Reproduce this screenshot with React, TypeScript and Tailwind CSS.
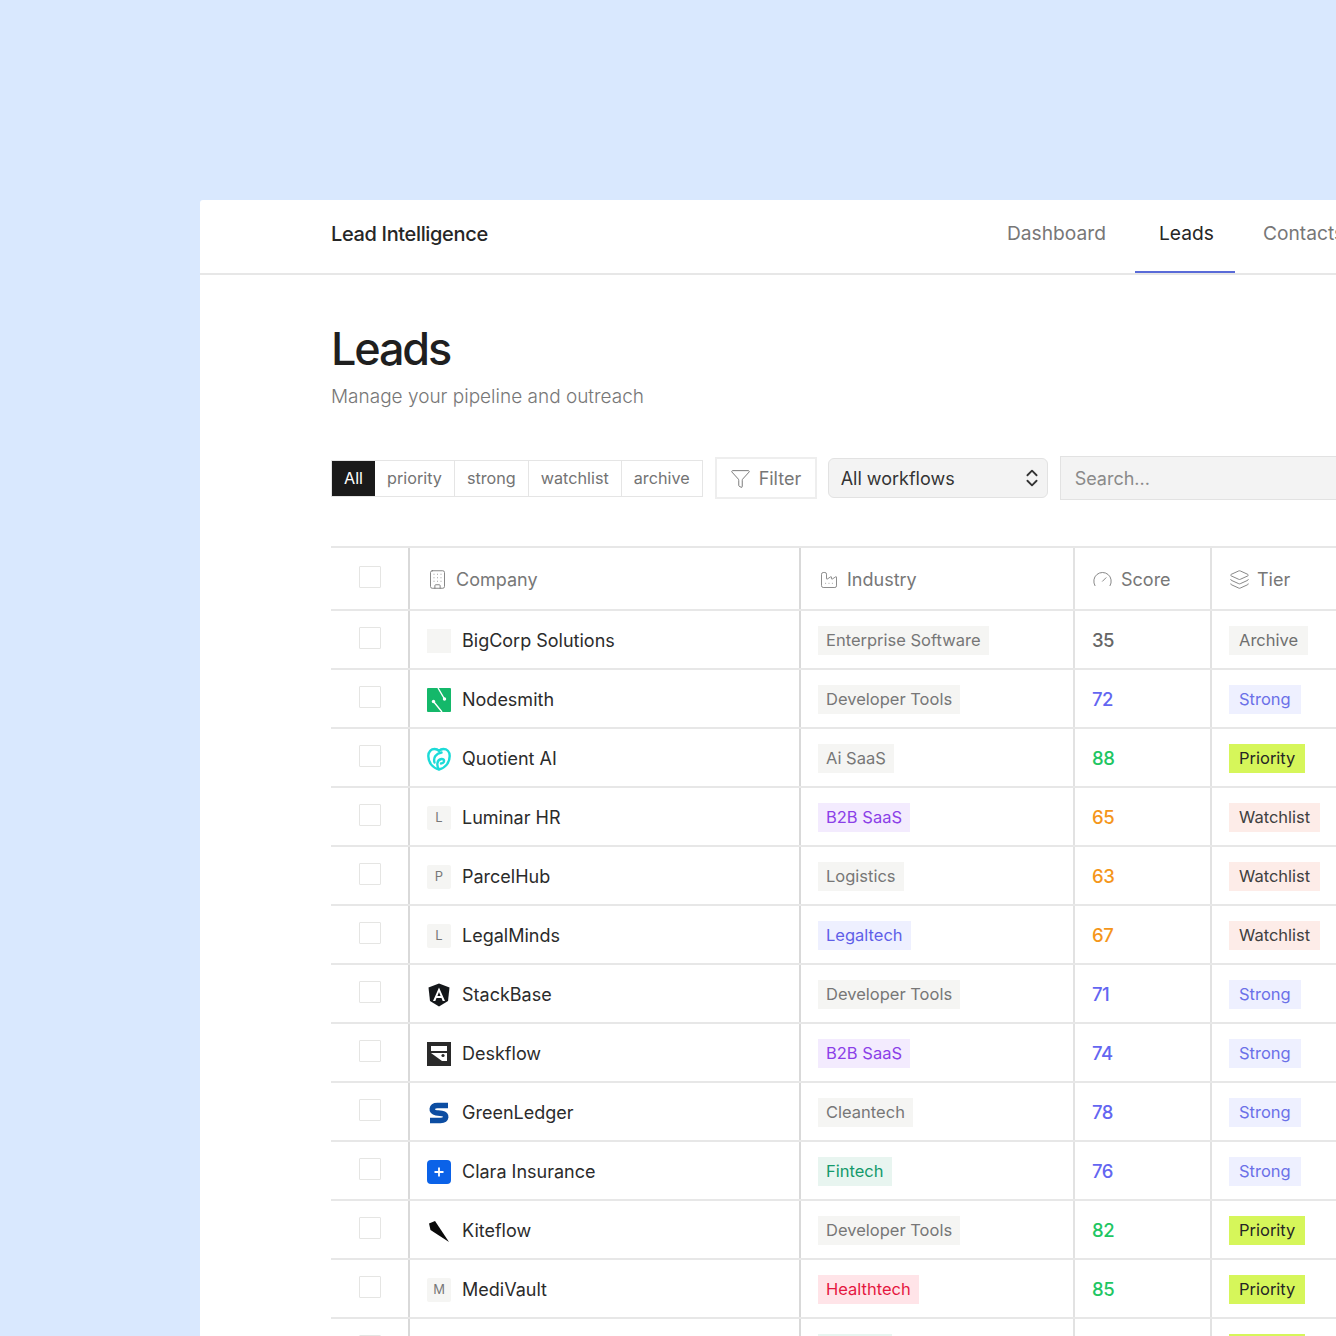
import { Building, Factory, Gauge, Layers, Funnel, ChevronsUpDown } from "lucide-react";

type Tier = "Archive" | "Strong" | "Priority" | "Watchlist";

interface Lead {
  name: string;
  logo: string;
  industry: string;
  score: number;
  tier: Tier;
}

const leads: Lead[] = [
  { name: "BigCorp Solutions", logo: "", industry: "Enterprise Software", score: 35, tier: "Archive" },
  { name: "Nodesmith", logo: "nodesmith", industry: "Developer Tools", score: 72, tier: "Strong" },
  { name: "Quotient AI", logo: "quotient", industry: "Ai SaaS", score: 88, tier: "Priority" },
  { name: "Luminar HR", logo: "L", industry: "B2B SaaS", score: 65, tier: "Watchlist" },
  { name: "ParcelHub", logo: "P", industry: "Logistics", score: 63, tier: "Watchlist" },
  { name: "LegalMinds", logo: "L", industry: "Legaltech", score: 67, tier: "Watchlist" },
  { name: "StackBase", logo: "stackbase", industry: "Developer Tools", score: 71, tier: "Strong" },
  { name: "Deskflow", logo: "deskflow", industry: "B2B SaaS", score: 74, tier: "Strong" },
  { name: "GreenLedger", logo: "greenledger", industry: "Cleantech", score: 78, tier: "Strong" },
  { name: "Clara Insurance", logo: "clara", industry: "Fintech", score: 76, tier: "Strong" },
  { name: "Kiteflow", logo: "kiteflow", industry: "Developer Tools", score: 82, tier: "Priority" },
  { name: "MediVault", logo: "M", industry: "Healthtech", score: 85, tier: "Priority" },
  { name: "", logo: "none", industry: "Fintech", score: 80, tier: "Priority" },
];

const industryClass: Record<string, string> = {
  "B2B SaaS": "bg-[#f3ebfe] text-[#8b3fe8]",
  Legaltech: "bg-[#eef0ff] text-[#5f5fe8]",
  Fintech: "bg-[#e8f5f0] text-[#149a6b]",
  Healthtech: "bg-[#ffe4e8] text-[#e5173f]",
};

const tierClass: Record<Tier, string> = {
  Archive: "bg-[#f5f5f3] text-[#6f6f6f]",
  Strong: "bg-[#eef0ff] text-[#6b70e8]",
  Priority: "bg-[#d6f65a] text-[#262626]",
  Watchlist: "bg-[#fdece8] text-[#404040]",
};

function scoreClass(score: number) {
  if (score >= 80) return "text-[#1fc663]";
  if (score >= 70) return "text-[#6366f1]";
  if (score >= 60) return "text-[#f5961b]";
  return "text-[#666666]";
}

function Logo({ kind }: { kind: string }) {
  if (kind === "none") return null;
  if (kind === "") return <div className="h-6 w-6 bg-[#f5f5f3]" />;
  if (kind.length === 1) {
    return <div className="flex h-6 w-6 items-center justify-center rounded-[2px] bg-[#f5f5f3] text-[13px] text-[#777777]">{kind}</div>;
  }
  if (kind === "nodesmith") {
    return (
      <svg viewBox="0 0 24 24" className="h-6 w-6">
        <rect width="24" height="24" rx="1" fill="#14b86a" />
        <path d="M11 0l6.500 11M6.500 13.500 15 24" stroke="#fff" strokeWidth="1.400" fill="none" />
        <circle cx="17.500" cy="11" r="1.700" fill="#fff" />
        <circle cx="6.500" cy="13.500" r="1.700" fill="#fff" />
      </svg>
    );
  }
  if (kind === "quotient") {
    return (
      <svg viewBox="0 0 24 24" className="h-6 w-6" fill="none" stroke="#1ddbd8" strokeWidth="2.400" strokeLinecap="round">
        <path d="M12 22.500C5.500 21 1.300 15.500 1.300 9 1.300 4.500 4.200 2 7.500 2c2 0 3.500 .8 4.500 2 1-1.200 2.500-2 4.500-2 3.300 0 6.200 2.500 6.200 7 0 6.500-4.200 12-10.700 13.500z" />
        <path d="M7.500 15.500C6 10.500 9 6.500 14.500 5.500M12 22c-2.500-3-2.500-9.500 2.500-10 3.500-.3 3.500 4-.5 4.500" />
      </svg>
    );
  }
  if (kind === "stackbase") {
    return (
      <svg viewBox="0 0 24 24" className="h-6 w-6">
        <path d="M12 .5 22.500 4.500 21 18 12 23.500 3 18 1.500 4.500z" fill="#14171a" />
        <path d="M12 4.500 6 18h2.300l1.200-3h5l1.200 3H18zM10.400 13 12 9l1.600 4z" fill="#fff" />
      </svg>
    );
  }
  if (kind === "deskflow") {
    return (
      <svg viewBox="0 0 24 24" className="h-6 w-6">
        <rect width="24" height="24" fill="#2a2a2a" />
        <path d="M4 4h16v5H4z" fill="#fff" />
        <path d="M4 11h16v8h-5z" fill="#fff" />
        <circle cx="16" cy="13.500" r="1.600" fill="#2a2a2a" />
      </svg>
    );
  }
  if (kind === "greenledger") {
    return (
      <svg viewBox="0 0 24 24" className="h-6 w-6">
        <path d="M21 4.500H10.500C4 4.500 3.500 11 9 11.800l6 .6C20.500 13 20 19.500 13.500 19.500H3" fill="none" stroke="#0c4da2" strokeWidth="5.500" />
      </svg>
    );
  }
  if (kind === "clara") {
    return (
      <svg viewBox="0 0 24 24" className="h-6 w-6">
        <rect width="24" height="24" rx="4" fill="#0b62e8" />
        <path d="M12 7.500v9M7.500 12h9" stroke="#fff" strokeWidth="1.800" />
      </svg>
    );
  }
  return (
    <svg viewBox="0 0 24 24" className="h-6 w-6">
      <path d="M2 4.500 8 2 22 23 3.500 11z" fill="#0a0a0a" />
    </svg>
  );
}

function Checkbox() {
  return <div className="h-[22px] w-[22px] rounded-[1px] border border-[#e5e5e3] bg-white" />;
}

const filters = ["priority", "strong", "watchlist", "archive"];
const rowGrid = "grid grid-cols-[79px_391px_274px_137px_1fr]";

export default function App() {
  return (
    <div className="h-[1336px] w-[1336px] overflow-hidden bg-[#d9e8fe] pl-[200px] pt-[200px] font-['Inter',sans-serif] text-[#262626]">
      <div className="h-[1136px] w-[1300px] overflow-hidden rounded-tl-[3px] bg-white">
        <header className="flex h-[75px] items-center justify-between border-b-2 border-[#e7e7e7] pl-[131px]">
          <div className="pb-[5px] text-[20px] font-medium tracking-[-0.35px]">Lead Intelligence</div>
          <nav className="flex h-full w-[517px] shrink-0 gap-1 text-[19.200px] text-[#777777]">
            <a className="w-[148px] px-6 pt-[19px]">Dashboard</a>
            <a className="w-[100px] border-b-2 border-[#5a6bd8] px-6 pt-[19px] text-[#262626]">Leads</a>
            <a className="px-6 pt-[19px]">Contacts</a>
          </nav>
        </header>

        <main className="pl-[131px]">
          <h1 className="mt-[45px] text-[45px] leading-[58px] font-medium tracking-[-2.200px] text-[#1f1f1f]">Leads</h1>
          <p className="mt-[5px] text-[19px] leading-[28px] font-light text-[#777777]">Manage your pipeline and outreach</p>

          <div className="mt-[45px] flex h-[44px] items-center gap-3">
            <div className="flex h-[37px] border border-[#e5e5e5] text-[16.200px] text-[#737373]">
              <button className="bg-[#1a1a1a] px-3 text-white">All</button>
              {filters.map((f) => (
                <button key={f} className="border-r border-[#e5e5e5] px-3 last:border-r-0">{f}</button>
              ))}
            </div>
            <button className="flex h-[42px] w-[102px] items-center gap-2 border-2 border-[#eeeeee] pl-[13px] text-[18px] text-[#777777]">
              <Funnel size={21} strokeWidth={1.100} />
              Filter
            </button>
            <div className="-ml-px flex h-[40px] w-[220px] items-center justify-between rounded-md border border-[#e2e2e2] bg-[#f3f3f3] pl-3 pr-[4px] text-[18px] text-[#333333]">
              All workflows
              <ChevronsUpDown size={22} strokeWidth={2} />
            </div>
            <div className="flex h-[44px] w-[300px] items-center border border-[#e2e2e2] bg-[#f3f3f3] pl-[14px] text-[18px] text-[#8a8a8a]">Search...</div>
          </div>

          <div className="mt-[46px] border-t-2 border-[#e7e7e7]">
            <div className={`${rowGrid} h-[63px] border-b-2 border-[#e7e7e7] text-[18px] text-[#777777]`}>
              <div className="flex justify-center border-r-2 border-[#d9d9d9] pt-[18px]"><Checkbox /></div>
              <div className="flex items-center gap-[8px] border-r-2 border-[#d9d9d9] pl-[17px] pt-0.5">
                <Building size={21} strokeWidth={1} />
                Company
              </div>
              <div className="flex items-center gap-[8px] border-r-2 border-[#e2e2e2] pl-[18px] pt-0.5">
                <Factory size={20} strokeWidth={1} />
                Industry
              </div>
              <div className="flex items-center gap-[8px] border-r-2 border-[#e2e2e2] pl-[17px] pt-0.5">
                <Gauge size={21} strokeWidth={1} />
                Score
              </div>
              <div className="flex items-center gap-[7px] pl-[17px] pt-0.5">
                <Layers size={21} strokeWidth={1} />
                Tier
              </div>
            </div>

            {leads.map((lead, i) => (
              <div key={i} className={`${rowGrid} h-[59px] border-b-2 border-[#e7e7e7] text-[18px]`}>
                <div className="flex justify-center border-r-2 border-[#d9d9d9] pt-[16px]"><Checkbox /></div>
                <div className="flex items-center gap-[11px] border-r-2 border-[#d9d9d9] pl-[17px] pt-0.5 text-[#2b2b2b]">
                  <Logo kind={lead.logo} />
                  {lead.name}
                </div>
                <div className="flex items-center border-r-2 border-[#e2e2e2] pl-[17px] pt-0.5">
                  <span className={`h-[29px] px-2 text-[16.500px] leading-[29px] ${industryClass[lead.industry] ?? "bg-[#f5f5f3] text-[#777777]"}`}>{lead.industry}</span>
                </div>
                <div className={`flex items-center border-r-2 border-[#e2e2e2] pl-[17px] pt-0.5 text-[18.500px] font-medium tracking-[-0.5px] ${scoreClass(lead.score)}`}>{lead.score}</div>
                <div className="flex items-center pl-[17px] pt-0.5">
                  <span className={`h-[29px] px-[10px] text-[16.500px] leading-[29px] ${tierClass[lead.tier]}`}>{lead.tier}</span>
                </div>
              </div>
            ))}
          </div>
        </main>
      </div>
    </div>
  );
}
